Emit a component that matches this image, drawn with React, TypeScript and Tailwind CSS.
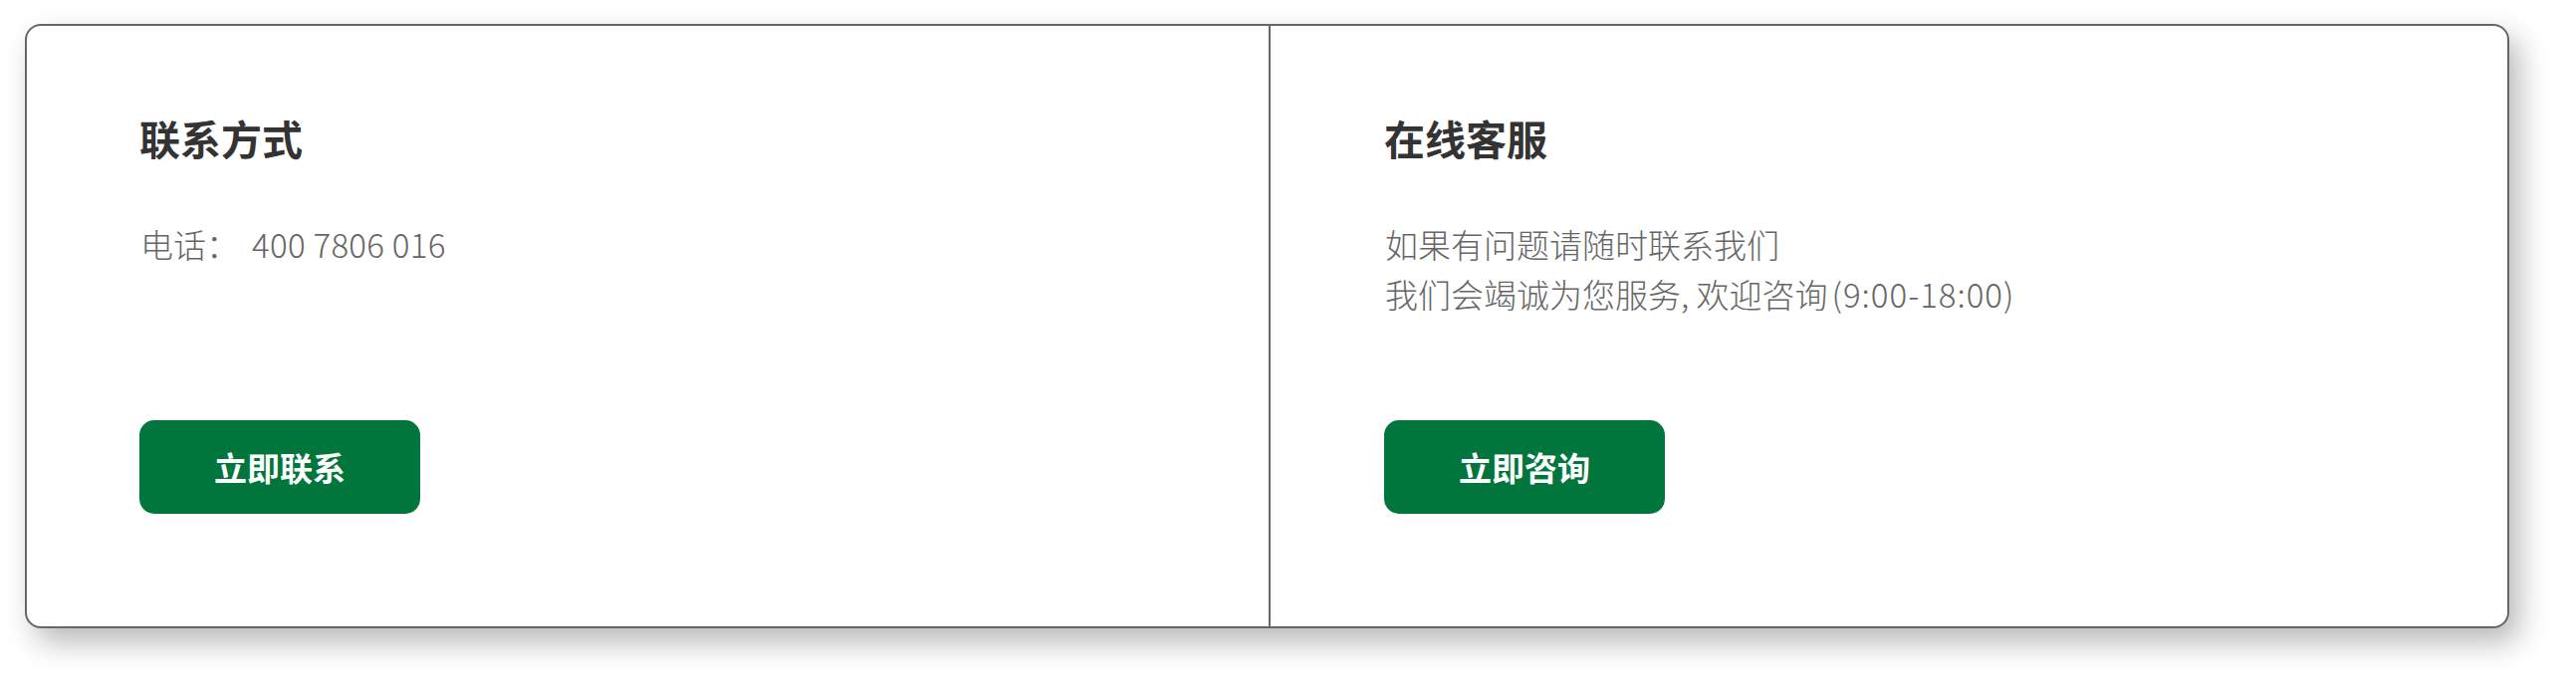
const cjk = "font-['Noto_Sans_CJK_SC',_'Noto_Sans',_sans-serif]";

function ActionButton({ label }: { label: string }) {
  return (
    <button
      className={`mt-auto w-[282px] h-[94px] rounded-[15px] bg-[#00763c] text-white text-[33px] font-bold leading-none flex items-center justify-center ${cjk}`}
    >
      {label}
    </button>
  );
}

export default function App() {
  return (
    <div className="w-[2587px] h-[700px] bg-white pt-[24px] pl-[25px]">
      <div
        className={`w-[2495px] h-[607px] bg-white border-2 border-[#666666] rounded-[16px] grid grid-cols-[1249px_1fr] shadow-[10px_14px_30px_rgba(0,0,0,0.28)] ${cjk}`}
      >
        {/* 联系方式 */}
        <section className="border-r-2 border-[#666666] flex flex-col pl-[113px] pt-[92px] pb-[113px]">
          <h2 className="text-[41px] font-bold leading-none text-[#333333]">联系方式</h2>
          <p className="mt-[61px] text-[33px] font-light leading-[50px] text-[#666666] pl-[1px]">
            电话：<span className="ml-[13px] tracking-[0.3px]">400 7806 016</span>
          </p>
          <ActionButton label="立即联系" />
        </section>

        {/* 在线客服 */}
        <section className="flex flex-col pl-[114px] pt-[92px] pb-[113px]">
          <h2 className="text-[41px] font-bold leading-none text-[#333333]">在线客服</h2>
          <div className="mt-[61px] text-[33px] font-light leading-[50px] text-[#666666] pl-[1px]">
            <p>如果有问题请随时联系我们</p>
            <p>
              我们会竭诚为您服务, 欢迎咨询<span className="ml-[4px] tracking-[1px]">(9:00-18:00)</span>
            </p>
          </div>
          <ActionButton label="立即咨询" />
        </section>
      </div>
    </div>
  );
}
